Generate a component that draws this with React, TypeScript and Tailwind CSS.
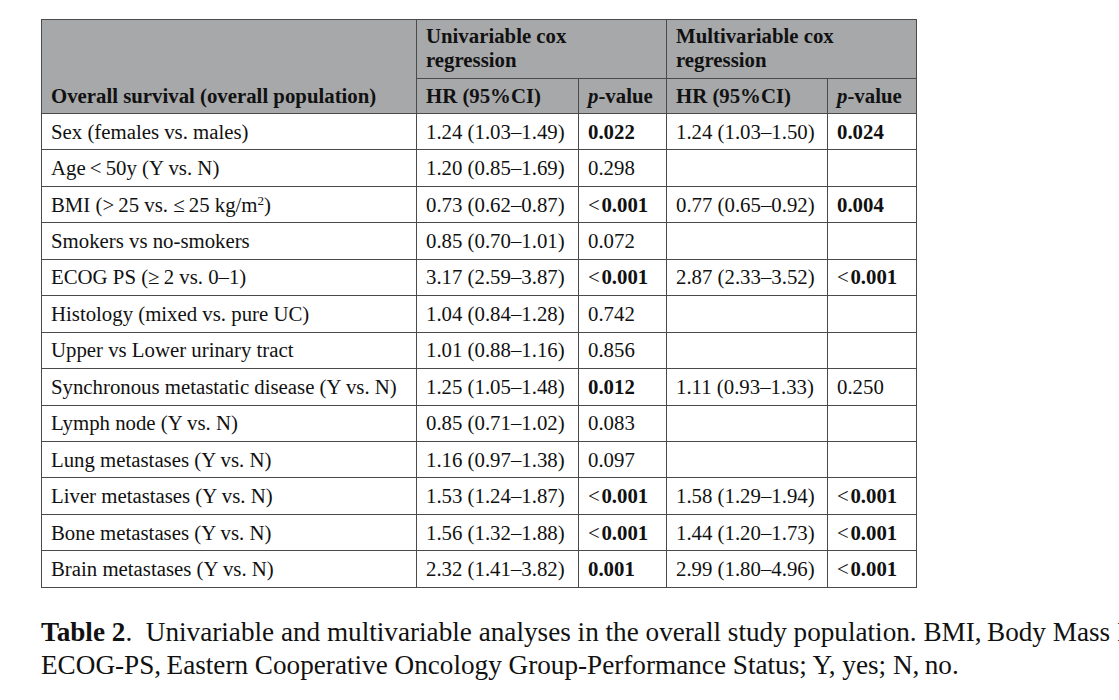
import React from "react";

type Row = {
  label: React.ReactNode;
  hr1: string;
  p1: React.ReactNode;
  hr2?: string;
  p2?: React.ReactNode;
};

const B = ({ children }: { children: React.ReactNode }) => <b className="font-bold">{children}</b>;
const LT = ({ v }: { v: string }) => (
  <span>
    <span className="font-normal">&lt;&#8202;</span>
    <b className="font-bold">{v}</b>
  </span>
);

const rows: Row[] = [
  { label: "Sex (females vs. males)", hr1: "1.24 (1.03–1.49)", p1: <B>0.022</B>, hr2: "1.24 (1.03–1.50)", p2: <B>0.024</B> },
  { label: "Age\u2009<\u200950y (Y vs. N)", hr1: "1.20 (0.85–1.69)", p1: "0.298" },
  {
    label: (
      <>
        BMI (&gt;&#8201;25 vs. ≤&#8201;25 kg/m<sup className="text-[13px]">2</sup>)
      </>
    ),
    hr1: "0.73 (0.62–0.87)",
    p1: <LT v="0.001" />,
    hr2: "0.77 (0.65–0.92)",
    p2: <B>0.004</B>,
  },
  { label: "Smokers vs no-smokers", hr1: "0.85 (0.70–1.01)", p1: "0.072" },
  { label: "ECOG PS (≥\u20092 vs. 0–1)", hr1: "3.17 (2.59–3.87)", p1: <LT v="0.001" />, hr2: "2.87 (2.33–3.52)", p2: <LT v="0.001" /> },
  { label: "Histology (mixed vs. pure UC)", hr1: "1.04 (0.84–1.28)", p1: "0.742" },
  { label: "Upper vs Lower urinary tract", hr1: "1.01 (0.88–1.16)", p1: "0.856" },
  { label: "Synchronous metastatic disease (Y vs. N)", hr1: "1.25 (1.05–1.48)", p1: <B>0.012</B>, hr2: "1.11 (0.93–1.33)", p2: "0.250" },
  { label: "Lymph node (Y vs. N)", hr1: "0.85 (0.71–1.02)", p1: "0.083" },
  { label: "Lung metastases (Y vs. N)", hr1: "1.16 (0.97–1.38)", p1: "0.097" },
  { label: "Liver metastases (Y vs. N)", hr1: "1.53 (1.24–1.87)", p1: <LT v="0.001" />, hr2: "1.58 (1.29–1.94)", p2: <LT v="0.001" /> },
  { label: "Bone metastases (Y vs. N)", hr1: "1.56 (1.32–1.88)", p1: <LT v="0.001" />, hr2: "1.44 (1.20–1.73)", p2: <LT v="0.001" /> },
  { label: "Brain metastases (Y vs. N)", hr1: "2.32 (1.41–3.82)", p1: <B>0.001</B>, hr2: "2.99 (1.80–4.96)", p2: <LT v="0.001" /> },
];

const base = "border border-[#4a4a4a] px-[9px] py-0 text-left whitespace-nowrap";
const cell = `${base} align-middle`;

export default function App() {
  return (
    <div
      className="w-[1119px] h-[700px] overflow-hidden bg-white text-[#111]"
      style={{ fontFamily: '"Liberation Serif", "DejaVu Serif", serif' }}
    >
      <div className="pt-[19px] pl-[41px]">
        <table className="border-collapse table-fixed w-[875px] text-[20.8px] leading-[24px]">
          <colgroup>
            <col className="w-[375px]" />
            <col className="w-[162px]" />
            <col className="w-[88px]" />
            <col className="w-[161px]" />
            <col className="w-[89px]" />
          </colgroup>
          <thead className="bg-[#a7a8aa] font-bold">
            <tr className="h-[59px]">
              <th rowSpan={2} className={`${base} align-bottom pb-[5px] font-bold`}>
                Overall survival (overall population)
              </th>
              <th colSpan={2} className={`${base} align-top pt-[4px] font-bold leading-[24px]`}>
                Univariable cox
                <br />
                regression
              </th>
              <th colSpan={2} className={`${base} align-top pt-[4px] font-bold leading-[24px]`}>
                Multivariable cox
                <br />
                regression
              </th>
            </tr>
            <tr className="h-[35px]">
              <th className={`${cell} font-bold`}>HR (95%CI)</th>
              <th className={`${cell} font-bold`}>
                <i>p</i>-value
              </th>
              <th className={`${cell} font-bold`}>HR (95%CI)</th>
              <th className={`${cell} font-bold`}>
                <i>p</i>-value
              </th>
            </tr>
          </thead>
          <tbody>
            {rows.map((r, i) => (
              <tr key={i} className="h-[36.45px]">
                <td className={cell}>{r.label}</td>
                <td className={cell}>{r.hr1}</td>
                <td className={cell}>{r.p1}</td>
                <td className={cell}>{r.hr2 ?? ""}</td>
                <td className={cell}>{r.p2 ?? ""}</td>
              </tr>
            ))}
          </tbody>
        </table>
        <div className="mt-[28px] text-[27.2px] leading-[33px] whitespace-nowrap text-[#111]">
          <div>
            <b className="font-bold">Table 2</b>.&nbsp; Univariable and multivariable analyses in the overall study population. BMI,&#8201;Body Mass Index;
          </div>
          <div>ECOG-PS,&#8201;Eastern Cooperative Oncology Group-Performance Status; Y, yes; N,&#8201;no.</div>
        </div>
      </div>
    </div>
  );
}
